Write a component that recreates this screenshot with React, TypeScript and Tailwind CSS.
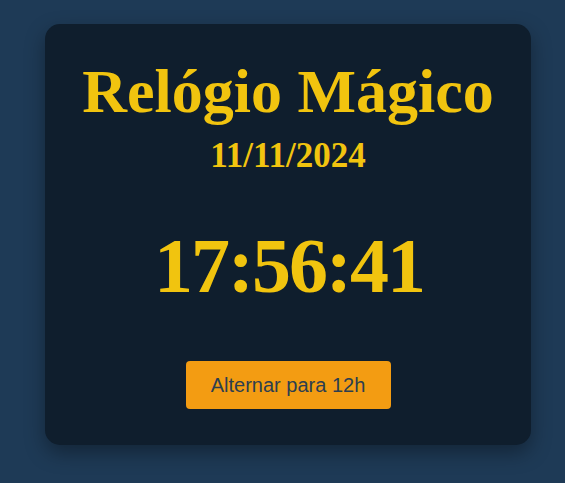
import React from "react";

export default function App() {
  return (
    <div className="min-h-[483px] w-full bg-[#1e3a56] pt-[24px] pl-[45px]">
      <div className="flex h-[421px] w-[486px] flex-col items-center rounded-[15px] bg-[#0f1e2d] pt-[36px] shadow-[0_8px_20px_rgba(0,0,0,0.35)]">
        <h1 className="font-['Liberation_Serif',serif] text-[62px] font-bold leading-[62px] text-[#f1c40f]">
          Relógio Mágico
        </h1>
        <div className="mt-[16px] font-['Liberation_Serif',serif] text-[35px] font-bold leading-[35px] text-[#f1c40f]">
          11/11/2024
        </div>
        <div className="mt-[54px] pl-[2px] font-['Liberation_Serif',serif] text-[78px] font-bold leading-[78px] tracking-[-2px] text-[#f1c40f]">
          17:56:41
        </div>
        <button className="mt-[56px] h-[48px] w-[205px] rounded-[4px] bg-[#f39c12] font-['Liberation_Sans',Arial,sans-serif] text-[20px] text-[#2c3e50]">
          Alternar para 12h
        </button>
      </div>
    </div>
  );
}
